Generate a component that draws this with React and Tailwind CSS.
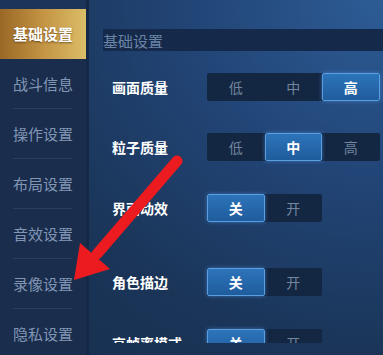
import React from "react";

const font = { fontFamily: '"Noto Sans CJK SC", "Noto Sans", sans-serif' };

const navItems = ["基础设置", "战斗信息", "操作设置", "布局设置", "音效设置", "录像设置", "隐私设置"];

function Seg({ options, active }) {
  return (
    <div className="flex h-full rounded-[2px] bg-[#132642]">
      {options.map((o, i) => (
        <div
          key={o}
          className={
            i === active
              ? "w-[57.5px] h-full flex items-center justify-center rounded-[2px] border border-[#5a9ee0] bg-gradient-to-b from-[#2d74ba] to-[#1f5c9c] text-white font-bold text-[14px] shadow-[0_0_4px_rgba(80,150,230,0.6)]"
              : "w-[57.5px] h-full flex items-center justify-center text-[#74869f] text-[14px]"
          }
        >
          {o}
        </div>
      ))}
    </div>
  );
}

function Row({ label, options, active, mt }) {
  return (
    <div className={`flex items-center h-[28px] ${mt}`}>
      <div className="w-[104px] pl-[9px] text-white font-bold text-[14px] leading-none">{label}</div>
      <Seg options={options} active={active} />
    </div>
  );
}

export default function App() {
  return (
    <div
      style={font}
      className="relative w-[383px] h-[355px] overflow-hidden flex bg-[radial-gradient(ellipse_at_top_right,#2d5c95_0%,#224577_35%,#1a3558_70%,#172f50_100%)]"
    >
      <div className="w-[86px] h-full pt-[9px] flex flex-col bg-[#1a2d4d] shrink-0 shadow-[inset_0_9px_0_#1c3458]">
        {navItems.map((n, i) => (
          <div key={n} className="relative h-[50px] flex items-center justify-center shrink-0">
            {i === 0 ? (
              <div className="absolute inset-0 bg-gradient-to-r from-[#9a6826] via-[#c39443] to-[#dbbd68]" />
            ) : null}
            <span
              className={
                i === 0
                  ? "relative text-white font-bold text-[15px] [text-shadow:0_1px_2px_rgba(60,30,0,0.6)]"
                  : "relative text-[#8196b4] text-[15px]"
              }
            >
              {n}
            </span>
            {i > 0 && i < navItems.length - 1 ? (
              <div className="absolute bottom-0 left-[13px] right-[14px] h-px bg-[#273f61]" />
            ) : null}
          </div>
        ))}
      </div>
      <div className="w-[3px] h-full bg-[#152846] shrink-0" />
      <div className="flex-1 h-[343px] overflow-hidden pl-[14px] pt-[29px]">
        <div className="h-[22px] bg-[#15294a] flex items-center text-[15px] text-[#6b84a6] leading-none">基础设置</div>
        <Row label="画面质量" options={["低", "中", "高"]} active={2} mt="mt-[22px]" />
        <Row label="粒子质量" options={["低", "中", "高"]} active={1} mt="mt-[32px]" />
        <Row label="界面动效" options={["关", "开"]} active={0} mt="mt-[33px]" />
        <Row label="角色描边" options={["关", "开"]} active={0} mt="mt-[46px]" />
        <Row label="高帧率模式" options={["关", "开"]} active={0} mt="mt-[33px]" />
      </div>
      <svg className="absolute left-0 top-0 pointer-events-none" width="383" height="355" viewBox="0 0 383 355">
        <line x1="177" y1="161" x2="97" y2="254" stroke="#ec1b1f" strokeWidth="11" strokeLinecap="round" />
        <polygon points="74,280 80,243 110,269" fill="#ec1b1f" />
      </svg>
    </div>
  );
}
